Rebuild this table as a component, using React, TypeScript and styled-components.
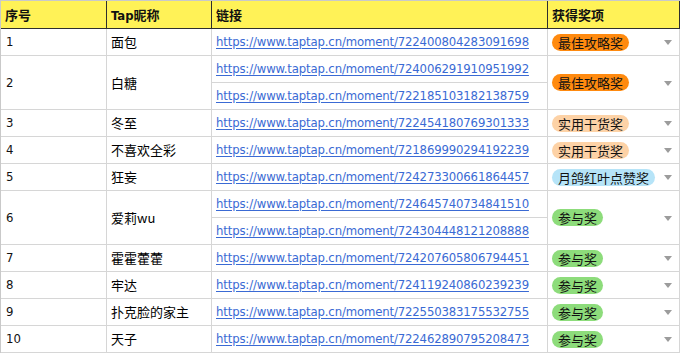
import React from "react";
import styled, { createGlobalStyle } from "styled-components";

const GlobalStyle = createGlobalStyle`
  html, body { margin: 0; padding: 0; background: #ffffff; }
  body {
    font-family: "DejaVu Sans Condensed", "DejaVu Sans", "Noto Sans CJK SC", sans-serif;
    font-size: 13px;
    color: #111111;
  }
`;

const Sheet = styled.table`
  border-collapse: separate;
  border-spacing: 0;
  table-layout: fixed;
  width: 680px;
  border-top: 1px solid #c9c9c9;
  border-left: 1px solid #c9c9c9;
`;

const HeadCell = styled.th`
  box-sizing: border-box;
  height: 28px;
  padding: 0 4px;
  background: #fff257;
  border-right: 1px solid #2e2e2e;
  border-bottom: 1px solid #2e2e2e;
  text-align: left;
  font-weight: bold;
  font-size: 13px;
  white-space: nowrap;
`;

const Cell = styled.td`
  box-sizing: border-box;
  height: 27px;
  padding: 0 4px 0 5px;
  border-right: 1px solid #d6d6d6;
  border-bottom: 1px solid #d6d6d6;
  vertical-align: middle;
  white-space: nowrap;
  line-height: 16px;
`;

const NameCell = styled(Cell)`
  padding-left: 4px;
  font-family: "Noto Sans CJK SC", "DejaVu Sans Condensed", sans-serif;
  color: #000000;
`;

const LinkCell = styled(Cell)`
  padding-left: 4px;
`;

const Link = styled.a`
  color: #3a6ad4;
  text-decoration: underline;
  text-underline-offset: 2px;
  letter-spacing: -0.15px;
`;

const AwardCell = styled(Cell)`
  padding: 0 7px 0 4px;
`;

const AwardWrap = styled.div`
  display: flex;
  align-items: center;
  justify-content: space-between;
`;

const badgeColors: Record<string, string> = {
  orange: "#ff8a0f",
  peach: "#fdd2a6",
  blue: "#b6e4f8",
  green: "#8ddc7b",
};

const Badge = styled.span<{ $tone: string }>`
  display: inline-block;
  height: 17px;
  line-height: 17px;
  padding: 0 6px;
  border-radius: 9px;
  background: ${(p) => badgeColors[p.$tone]};
  font-family: "Noto Sans CJK SC", sans-serif;
  font-size: 13px;
  color: #111111;
`;

const Arrow = styled.span`
  width: 0;
  height: 0;
  border-left: 4px solid transparent;
  border-right: 4px solid transparent;
  border-top: 5px solid #9c9c9c;
  margin-top: 1px;
`;

type Row = { n: number; name: string; links: string[]; award: string; tone: string };

const rows: Row[] = [
  { n: 1, name: "面包", links: ["722400804283091698"], award: "最佳攻略奖", tone: "orange" },
  { n: 2, name: "白糖", links: ["724006291910951992", "722185103182138759"], award: "最佳攻略奖", tone: "orange" },
  { n: 3, name: "冬至", links: ["722454180769301333"], award: "实用干货奖", tone: "peach" },
  { n: 4, name: "不喜欢全彩", links: ["721869990294192239"], award: "实用干货奖", tone: "peach" },
  { n: 5, name: "狂妄", links: ["724273300661864457"], award: "月鸽红叶点赞奖", tone: "blue" },
  { n: 6, name: "爱莉wu", links: ["724645740734841510", "724304448121208888"], award: "参与奖", tone: "green" },
  { n: 7, name: "霍霍藿藿", links: ["724207605806794451"], award: "参与奖", tone: "green" },
  { n: 8, name: "牢达", links: ["724119240860239239"], award: "参与奖", tone: "green" },
  { n: 9, name: "扑克脸的家主", links: ["722550383175532755"], award: "参与奖", tone: "green" },
  { n: 10, name: "天子", links: ["722462890795208473"], award: "参与奖", tone: "green" },
];

const url = (id: string) => `https://www.taptap.cn/moment/${id}`;

export default function App() {
  return (
    <>
      <GlobalStyle />
      <Sheet>
        <colgroup>
          <col style={{ width: 106 }} />
          <col style={{ width: 105 }} />
          <col style={{ width: 336 }} />
          <col style={{ width: 132 }} />
        </colgroup>
        <thead>
          <tr>
            <HeadCell>序号</HeadCell>
            <HeadCell>Tap昵称</HeadCell>
            <HeadCell>链接</HeadCell>
            <HeadCell>获得奖项</HeadCell>
          </tr>
        </thead>
        <tbody>
          {rows.map((r) =>
            r.links.map((id, i) => (
              <tr key={`${r.n}-${i}`}>
                {i === 0 && <Cell rowSpan={r.links.length}>{r.n}</Cell>}
                {i === 0 && <NameCell rowSpan={r.links.length}>{r.name}</NameCell>}
                <LinkCell>
                  <Link href={url(id)}>{url(id)}</Link>
                </LinkCell>
                {i === 0 && (
                  <AwardCell rowSpan={r.links.length}>
                    <AwardWrap>
                      <Badge $tone={r.tone}>{r.award}</Badge>
                      <Arrow />
                    </AwardWrap>
                  </AwardCell>
                )}
              </tr>
            ))
          )}
        </tbody>
      </Sheet>
    </>
  );
}
